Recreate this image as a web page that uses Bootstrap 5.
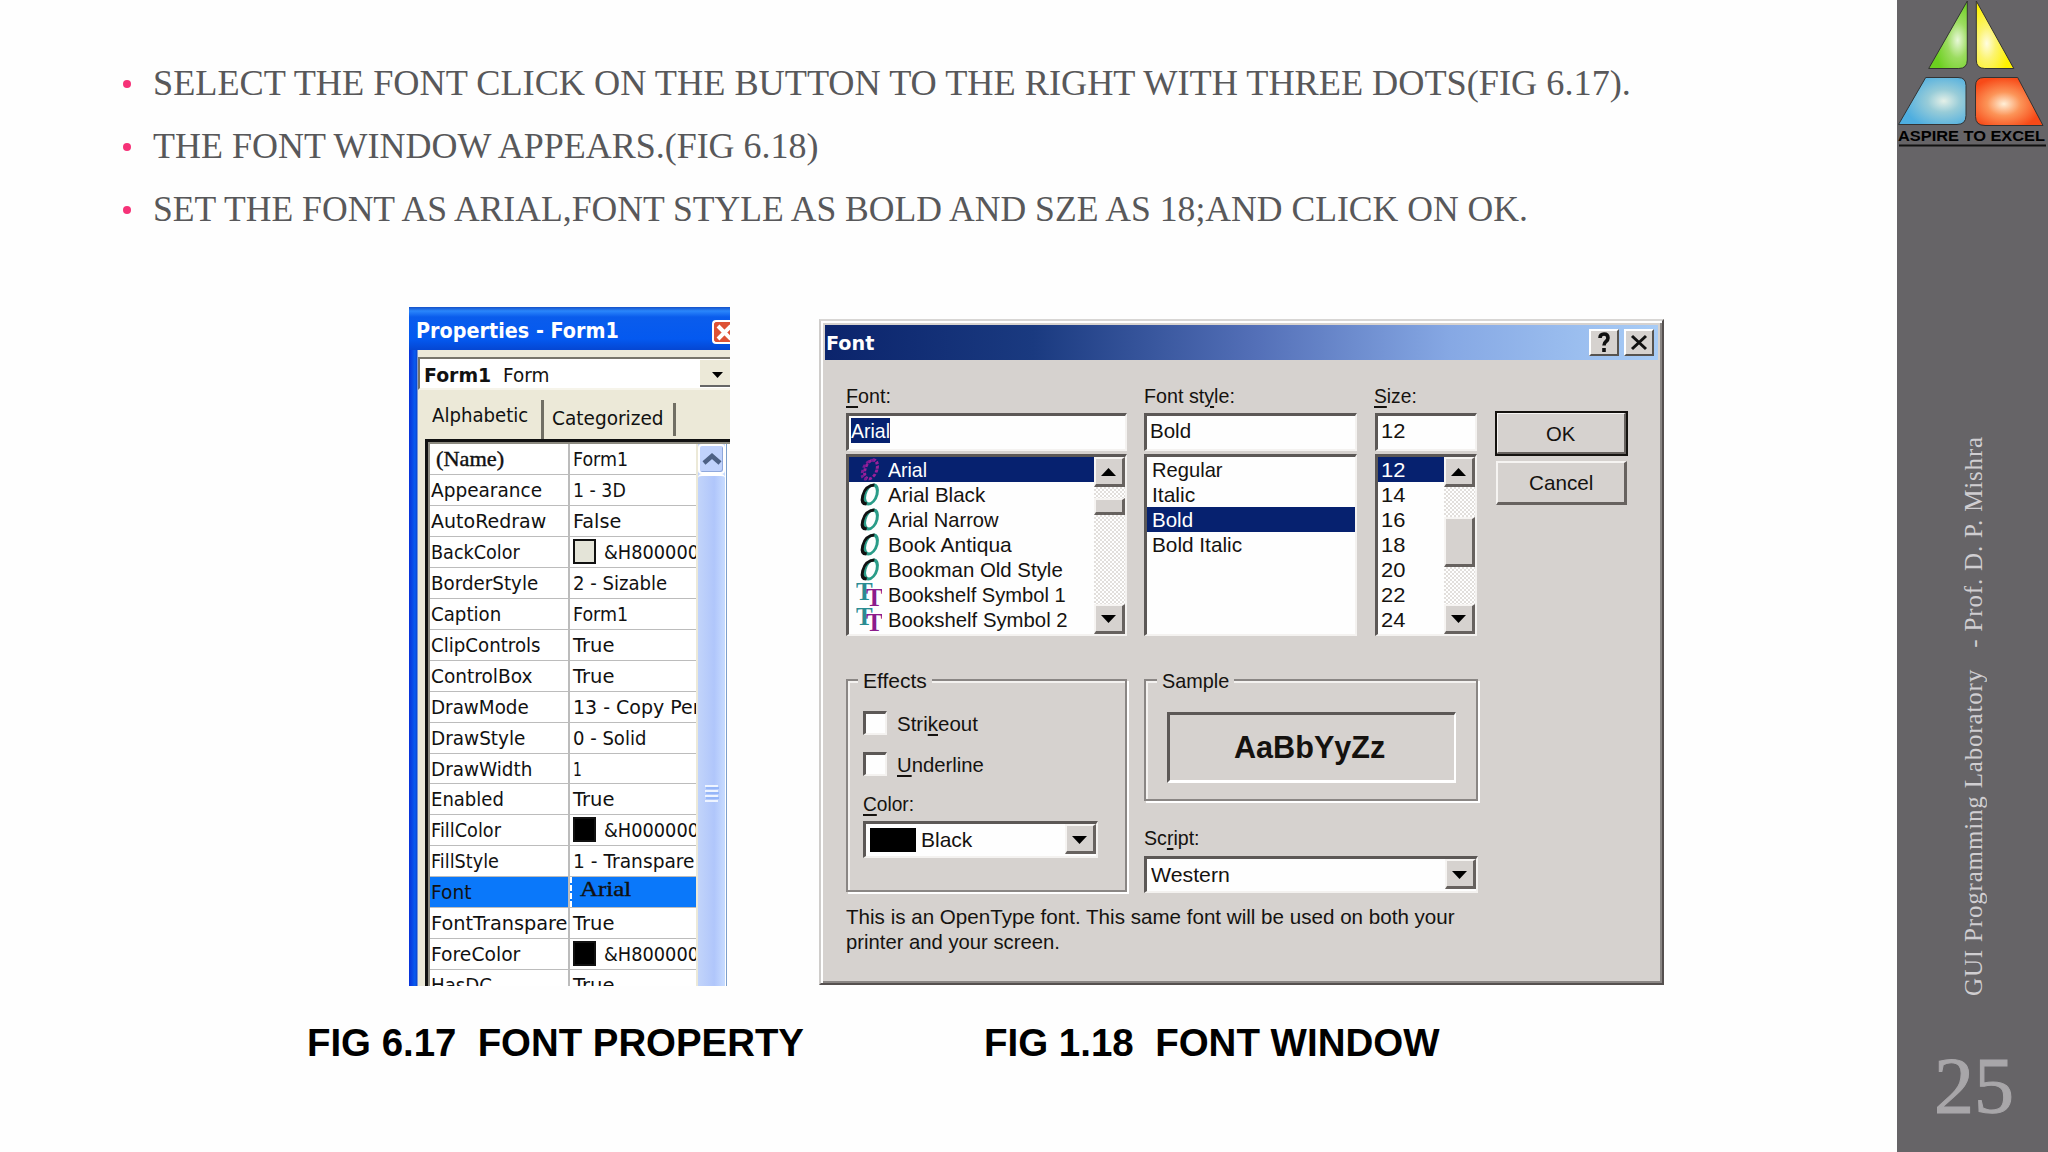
<!DOCTYPE html>
<html lang="en">
<head>
<meta charset="utf-8">
<title>GUI Programming Laboratory - 25</title>
<link href="https://cdn.jsdelivr.net/npm/bootstrap@5.3.0/dist/css/bootstrap.min.css" rel="stylesheet">
<style>
body{width:2048px;height:1152px;overflow:hidden;background:#fefefe;color:#000}
[data-w]{display:inline-block;white-space:pre;transform-origin:0 50%;flex:none}
.slide-main{width:1897px;height:1152px;flex:none}
.steps{margin:0;padding:52px 0 0 123px;font:35px/63px "Liberation Serif",serif;color:#58585a;list-style:none;height:307px}
.steps li{height:63px}
.steps li::before{content:"";flex:none;width:8px;height:8px;border-radius:50%;background:#f63278;margin:1px 22px 0 0}
.figures{padding-left:409px;height:679px}
/* properties window */
.prop-win{width:321px;height:679px;overflow:hidden;background:linear-gradient(90deg,#0831d9,#0a5cf0 6px,#0a44d0 8px,#ece9d8 9px);font:20px/31px "DejaVu Sans",sans-serif;color:#111}
.prop-title{height:43px;padding:6px 0 0 7px;background:linear-gradient(#1550c8,#2a86fb 4px,#0a5cec 10px,#0459f0 32px,#0546d2);color:#fff;font-weight:bold;font-size:21px}
.prop-close{width:18px;height:24px;background:#dd5236;border:2px solid #fff;border-right:0;border-radius:4px 0 0 4px;overflow:hidden}
.prop-combo{margin:7px 0 0 9px;height:33px;background:#fff;border:2px solid #77756a;border-right:0;border-bottom-color:#f6f4ea;padding:1px 0 0 4px}
.prop-arrow{width:30px;height:27px;background:#ece9d8;border-bottom:2px solid #666}
.prop-tabs{height:49px;padding-left:23px}
.tab-a{width:112px;height:39px;border-right:3px solid #716f64;margin-top:10px}
.tab-b{width:132px;height:33px;border-right:3px solid #716f64;margin-top:13px;padding-left:8px}
.prop-grid{margin-left:16px;height:547px;border-left:3px solid #111;border-top:3px solid #111;box-shadow:inset 2px 2px #8c8a80;padding:2px 0 0 2px}
.prop-rows{width:267px;height:545px;overflow:hidden;background:#fff}
.prop-row{height:30.960px;border-bottom:1.5px solid #bcbcbc;line-height:31px;width:266px}
.prop-row>div{padding-left:1px;white-space:nowrap;overflow:hidden;height:100%}
.prop-row .pk{width:140px;border-right:2px solid #bcbcbc;flex:none}
.prop-row .pv{padding-left:3px;flex:1}
.prop-row.chosen>div{background:#0a78fa}
.prop-row.chosen .pv{border-left:2px dashed #fff}
.old{font-family:"Liberation Serif",serif;font-size:21px;-webkit-text-stroke:.4px}
.tint{width:23px;height:25px;border:2px solid #111;margin:2px 8px 0 0;flex:none}
.prop-scroll{width:27px;margin-left:2px;background:linear-gradient(90deg,#c2d4fa,#b0c6fb 60%,#c8dcff)}
.prop-scroll .up{height:30px;background:#c0d2fc;border:2px solid #fff;border-radius:4px;box-shadow:inset -1px -1px #8fa8dc}
.prop-scroll .thumb{height:510px;border-top:2px solid #fff;border-radius:4px}
.prop-edge{width:5px;background:linear-gradient(90deg,#fff 1px,#7d9fcb 1px,#7d9fcb 2px,#fff 2px)}
/* font dialog */
.font-win{width:845px;height:666px;margin:12px 0 0 89px;background:#d6d2cf;border:2px solid #55504f;border-top-color:#d8d6d4;border-left-color:#cfcdcb;box-shadow:inset 2px 2px #fff,inset -2px -2px #8a8684;font:21px/25px "Liberation Sans",sans-serif;color:#15120f}
.font-title{margin:4px 4px 0 4px;height:35px;padding:0 4px 0 1px;background:linear-gradient(90deg,#0b246c,#1a3a80 25%,#5470b8 52%,#86a8e4 75%,#a8ccf6);color:#fff;font:bold 20px/34px "DejaVu Sans",sans-serif}
.cap-btn{width:30px;height:27px;background:#d6d2cf;border:2px solid #fff;border-right-color:#57534f;border-bottom-color:#57534f}
.font-body{padding:23px 0 0 25px}
.sunk{background:#fefefe;border:3px solid #5c5856;border-right:2px solid #f4f2f0;border-bottom:2px solid #f4f2f0}
.sunk-field{height:38px;margin-top:5px;padding:2px 4px}
.sunk-list{height:182px;margin-top:3px;overflow:hidden}
.w-font{width:281px}.w-style{width:213px;margin-left:17px}.w-size{width:102px;margin-left:18px}
.entry{height:25px;padding-left:5px;white-space:nowrap}
.picked{background:#06216f;color:#fff}
.fnt-ico{width:26px;height:25px;margin:0 6px 0 2px;flex:none}
.bar3d{width:31px;flex:none;background:repeating-conic-gradient(#fff 0 25%,#e2dfdc 0 50%) 0 0/4px 4px}
.raised{background:#d6d2cf;border:2px solid #f6f4f2;border-right:3px solid #67625f;border-bottom:3px solid #67625f}
.arrow-cell{height:30px;width:31px;flex:none}
.dlg-btn{width:131px;height:44px}
.dlg-btn.default-btn{outline:2px solid #15120f;outline-offset:-1px;height:43px}
.group3d{border:2px solid #8a8684;box-shadow:2px 2px #fff,inset 2px 2px #f4f2f0;position:relative}
.group3d>.legend-tag{position:absolute;top:-13px;left:10px;padding:0 5px;background:#d6d2cf;height:25px}
.box3d{width:24px;height:24px;margin-right:10px;flex:none}
.sample3d{margin:31px 0 0 21px;width:289px;height:71px;border:3px solid #5c5856;border-right:2px solid #fff;border-bottom:3px solid #fff;font:bold 31px/65px "Liberation Sans",sans-serif}
u{text-underline-offset:3px;text-decoration-thickness:2px}
.captions{padding:34px 0 0 307px;font:bold 39px/46px "Liberation Sans",sans-serif}
/* right rail */
.rail{width:151px;height:1152px;background:#666467;flex:none}
.rail-note{height:860px;width:151px;font:25px/30px "Liberation Serif",serif;color:#d0ced1}
.rail-note div{writing-mode:vertical-rl;transform:rotate(180deg);margin:0 0 0 62px;height:560px;white-space:pre}
.rail-num{font:80px/92px "Liberation Serif",serif;color:#a8a6a9;-webkit-text-stroke:1px #a8a6a9;padding-left:37px}
</style>
<script src="https://cdn.jsdelivr.net/npm/bootstrap@5.3.0/dist/js/bootstrap.bundle.min.js"></script>
</head>
<body>
<div class="d-flex">
<main class="slide-main">
  <ul class="steps">
    <li class="d-flex align-items-center"><span data-w="1478">SELECT THE FONT CLICK ON THE BUTTON TO THE RIGHT WITH THREE DOTS(FIG 6.17).</span></li>
    <li class="d-flex align-items-center"><span data-w="666">THE FONT WINDOW APPEARS.(FIG 6.18)</span></li>
    <li class="d-flex align-items-center"><span data-w="1375">SET THE FONT AS ARIAL,FONT STYLE AS BOLD AND SZE AS 18;AND CLICK ON OK.</span></li>
  </ul>
  <div class="figures d-flex">
    <section class="prop-win">
      <div class="prop-title d-flex justify-content-between align-items-center"><span data-w="203">Properties - Form1</span>
        <div class="prop-close"><svg class="d-block" width="18" height="20" viewBox="0 0 18 20"><path d="M4 4l13 13M17 4L4 17" stroke="#fff" stroke-width="4"/></svg></div></div>
      <div class="prop-combo d-flex"><b data-w="67">Form1</b><span data-w="46" style="margin-left:12px">Form</span>
        <div class="prop-arrow ms-auto"><svg class="d-block" width="30" height="26"><path d="M12 12h11l-5.500 6z"/></svg></div></div>
      <div class="prop-tabs d-flex"><div class="tab-a"><span data-w="96">Alphabetic</span></div><div class="tab-b"><span data-w="112">Categorized</span></div></div>
      <div class="prop-grid d-flex"><div class="prop-rows" id="rows"></div>
        <div class="prop-scroll"><div class="up"><svg class="d-block" width="23" height="26"><path d="M4 17l8-7 8 7" fill="none" stroke="#4d6185" stroke-width="4.500"/></svg></div>
          <div class="thumb d-flex align-items-center justify-content-center"><svg width="14" height="18" style="margin-top:125px"><path d="M0 2h13M0 7h13M0 12h13M0 17h13" stroke="#eef4ff" stroke-width="2"/><path d="M1 4h13M1 9h13M1 14h13" stroke="#8cb0f8" stroke-width="1.500"/></svg></div></div>
        <div class="prop-edge"></div></div>
    </section>
    <section class="font-win">
      <div class="font-title d-flex align-items-center"><span data-w="48">Font</span>
        <div class="cap-btn ms-auto"><svg class="d-block" width="26" height="23"><path d="M9 7q0-4 4-4t4 4q0 2-2 3.500t-2 4M13 17v4" fill="none" stroke="#111" stroke-width="3.600"/></svg></div>
        <div class="cap-btn" style="margin-left:5px"><svg class="d-block" width="26" height="23"><path d="M6 5l14 13M20 5L6 18" stroke="#111" stroke-width="3"/></svg></div></div>
      <div class="font-body">
        <div class="d-flex">
          <div class="w-font"><div><span data-w="45"><u>F</u>ont:</span></div>
            <div class="sunk sunk-field" style="padding-left:2px"><span class="picked" data-w="39">Arial</span></div>
            <div class="sunk sunk-list d-flex"><div class="flex-grow-1" id="fonts"></div>
              <div class="bar3d d-flex flex-column"><div class="raised arrow-cell"><svg class="d-block" width="26" height="25"><path d="M5 17h15l-7.500-8z"/></svg></div><div class="raised" style="height:17px;margin-top:11px"></div><div class="raised arrow-cell mt-auto"><svg class="d-block" width="26" height="25"><path d="M5 9h15l-7.500 8z"/></svg></div></div></div></div>
          <div class="w-style"><div><span data-w="91">Font st<u>y</u>le:</span></div>
            <div class="sunk sunk-field" style="padding-left:3px"><span data-w="41">Bold</span></div>
            <div class="sunk sunk-list"><div class="entry"><span data-w="71">Regular</span></div><div class="entry"><span data-w="43">Italic</span></div><div class="entry picked"><span data-w="41">Bold</span></div><div class="entry"><span data-w="90">Bold Italic</span></div></div></div>
          <div class="w-size"><div><span data-w="43" style="margin-left:-1px"><u>S</u>ize:</span></div>
            <div class="sunk sunk-field" style="padding-left:3px"><span data-w="24">12</span></div>
            <div class="sunk sunk-list d-flex"><div class="flex-grow-1" id="sizes"></div>
              <div class="bar3d d-flex flex-column"><div class="raised arrow-cell"><svg class="d-block" width="26" height="25"><path d="M5 17h15l-7.500-8z"/></svg></div><div class="raised" style="height:50px;margin-top:30px"></div><div class="raised arrow-cell mt-auto"><svg class="d-block" width="26" height="25"><path d="M5 9h15l-7.500 8z"/></svg></div></div></div></div>
          <div style="margin:29px 0 0 19px"><div class="raised dlg-btn default-btn d-flex align-items-center justify-content-center"><span data-w="29">OK</span></div>
            <div class="raised dlg-btn d-flex align-items-center justify-content-center" style="margin-top:6px"><span data-w="64">Cancel</span></div></div>
        </div>
        <div class="d-flex" style="margin-top:43px">
          <div class="group3d w-font" style="height:213px;padding:30px 0 0 15px"><span class="legend-tag"><span data-w="64">Effects</span></span>
            <div class="d-flex"><div class="sunk box3d"></div><span data-w="81">Stri<u>k</u>eout</span></div>
            <div class="d-flex" style="margin-top:16px"><div class="sunk box3d"></div><span data-w="87"><u>U</u>nderline</span></div>
            <div style="margin-top:14px"><span data-w="51"><u>C</u>olor:</span></div>
            <div class="sunk d-flex" style="margin-top:5px;width:235px;height:37px"><div class="bg-black" style="width:46px;height:24px;margin:4px 5px 0 4px"></div><span data-w="51" style="padding-top:3px">Black</span>
              <div class="raised arrow-cell ms-auto"><svg class="d-block" width="26" height="25"><path d="M5 10h15l-7.500 8z"/></svg></div></div></div>
          <div style="margin-left:17px;width:334px"><div class="group3d" style="height:122px"><span class="legend-tag" style="left:11px"><span data-w="67">Sample</span></span>
              <div class="sample3d text-center"><span data-w="151" style="position:relative;left:-2px">AaBbYyZz</span></div></div>
            <div style="margin-top:24px"><span data-w="56">Sc<u>r</u>ipt:</span></div>
            <div class="sunk d-flex" style="margin-top:6px;height:37px;padding-left:4px"><span data-w="79" style="padding-top:3px">Western</span>
              <div class="raised arrow-cell ms-auto"><svg class="d-block" width="26" height="25"><path d="M5 10h15l-7.500 8z"/></svg></div></div></div>
        </div>
        <div style="margin-top:11px"><div><span data-w="609">This is an OpenType font. This same font will be used on both your</span></div><div><span data-w="214">printer and your screen.</span></div></div>
      </div>
    </section>
  </div>
  <div class="captions d-flex"><span data-w="497">FIG 6.17  FONT PROPERTY</span><span data-w="456" style="margin-left:180px">FIG 1.18  FONT WINDOW</span></div>
</main>
<aside class="rail">
  <svg class="d-block" width="151" height="150" viewBox="0 0 151 150">
    <defs>
      <radialGradient id="g" cx=".75" cy=".58" r=".6"><stop offset="0" stop-color="#e8f8d8"/><stop offset=".45" stop-color="#9cdc60"/><stop offset="1" stop-color="#6cd020"/></radialGradient>
      <radialGradient id="y" cx=".28" cy=".63" r=".6"><stop offset="0" stop-color="#fffde0"/><stop offset=".4" stop-color="#fcf470"/><stop offset="1" stop-color="#fff200"/></radialGradient>
      <radialGradient id="b" cx=".67" cy=".5" r=".6"><stop offset="0" stop-color="#e4f0e8"/><stop offset=".4" stop-color="#98ccd8"/><stop offset="1" stop-color="#4eaee0"/></radialGradient>
      <radialGradient id="r" cx=".42" cy=".55" r=".55"><stop offset="0" stop-color="#fff0d8"/><stop offset=".45" stop-color="#fc9458"/><stop offset="1" stop-color="#f84a18"/></radialGradient>
    </defs>
    <g stroke="#333" stroke-width="1">
      <path fill="url(#g)" d="M70.300 1V60q0 8.500-8.500 8.500H31.700z"/>
      <path fill="url(#y)" d="M79.300 1V60q0 8.500 8.500 8.500h29z"/>
      <path fill="url(#b)" d="M28.700 77.500H61q8 0 8 8v30q0 9-9 9H1.500z"/>
      <path fill="url(#r)" d="M87 77.500h33.700l25.300 48H88q-9.500 0-9.500-9V86q0-8.500 8.500-8.500z"/>
    </g>
    <text x="1" y="141.300" textLength="147" lengthAdjust="spacingAndGlyphs" font-family="Liberation Sans, sans-serif" font-weight="bold" font-size="14.500">ASPIRE TO EXCEL</text>
    <path d="M2 145.500h147" stroke="#111" stroke-width="2"/>
  </svg>
  <div class="rail-note" style="padding-top:286px"><div><span id="note">GUI Programming Laboratory   - Prof. D. P. Mishra</span></div></div>
  <div class="rail-num" style="padding-top:30px">25</div>
</aside>
</div>
<script>
const props=[["(Name)","Form1",68,55],["Appearance","1 - 3D",111,53],["AutoRedraw","False",115,48],["BackColor","&H800000",89,95,"#e4e4d8"],["BorderStyle","2 - Sizable",107,94],["Caption","Form1",70,55],["ClipControls","True",110,41],["ControlBox","True",101,41],["DrawMode","13 - Copy Pen",98,132],["DrawStyle","0 - Solid",94,73],["DrawWidth","1",101,9],["Enabled","True",73,41],["FillColor","&H000000",70,95,"#000"],["FillStyle","1 - Transpare",68,122],["Font","Arial",41,51],["FontTranspare","True",136,41],["ForeColor","&H800000",89,95,"#000"],["HasDC","True",61,41]];
const t=(s,w,c="",st="")=>`<span class="${c}" data-w="${w}" style="${st}">${s.replace("&","&amp;")}</span>`;
rows.innerHTML=props.map((p,i)=>`<div class="prop-row d-flex ${p[0]=="Font"?"chosen":""}"><div class="pk">${t(p[0],p[2],i?"":"old",i?"":"margin-left:5px;line-height:25px")}</div><div class="pv d-flex">${p[4]?`<div class="tint" style="background:${p[4]}"></div>`:""}${t(p[1],p[3],p[0]=="Font"?"old":"",p[0]=="Font"?"margin-left:5px;line-height:25px":"")}</div></div>`).join("");
const oIcon=sel=>`<svg class="fnt-ico" viewBox="0 0 26 25"><g fill="none" transform="translate(13 12.500) skewX(-14)"><ellipse cx="2" rx="6" ry="9.500" stroke="${sel?"#9a209a":"#2a9c88"}" stroke-width="3" ${sel?'stroke-dasharray="3 1.500"':""}/><path d="M3 -9.500Q-6 -9 -6 1 -6 9.500 0 9.500" stroke="${sel?"#7a1c94":"#111"}" stroke-width="3" ${sel?'stroke-dasharray="3 2"':""}/></g></svg>`;
const tIcon=`<svg class="fnt-ico" viewBox="0 0 26 25" font-family="Liberation Serif, serif" font-weight="bold" font-size="25"><text x="0" y="18" fill="#2a8c92">T</text><text x="10" y="24" fill="#8c1c8c">T</text></svg>`;
fonts.innerHTML=[["Arial",39],["Arial Black",97],["Arial Narrow",111],["Book Antiqua",124],["Bookman Old Style",175],["Bookshelf Symbol 1",178],["Bookshelf Symbol 2",180]].map((f,i)=>`<div class="entry d-flex ${i?"":"picked"}">${i<5?oIcon(!i):tIcon}${t(f[0],f[1])}</div>`).join("");
sizes.innerHTML=[12,14,16,18,20,22,24].map((n,i)=>`<div class="entry ${i?"":"picked"}" style="padding-left:3px">${t(""+n,24)}</div>`).join("");
/* condense or widen every label to its set width; the margin keeps the flow in step */
document.querySelectorAll("[data-w]").forEach(e=>{const n=e.offsetWidth,w=+e.dataset.w;e.style.transform=`scaleX(${w/n})`;e.style.marginRight=(w-n)+"px"});
const n=note.getBoundingClientRect().height;note.style.letterSpacing=(560-n)/note.textContent.length+"px";
</script>
</body>
</html>
